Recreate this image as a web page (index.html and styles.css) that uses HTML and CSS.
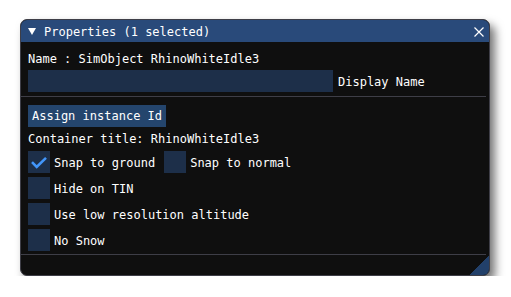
FILE: index.html
```html
<!DOCTYPE html>
<html lang="en">
<head>
  <meta charset="UTF-8" />
  <title>Properties</title>
  <link rel="stylesheet" href="styles.css">
</head>
<body>

  <div class="window">
    <div class="title-bar">
      <svg class="collapse" width="8" height="7" viewBox="0 0 8 7"><polygon points="0,0 8,0 4,7" fill="#fff"/></svg>
      <span class="title">Properties (1 selected)</span>
      <svg class="close" width="10" height="10" viewBox="0 0 10 10"><path d="M0.5 0.5 L9.5 9.5 M9.5 0.5 L0.5 9.5" stroke="#fff" stroke-width="1.2"/></svg>
    </div>

    <div class="content">
      <div class="text name-line">Name : SimObject RhinoWhiteIdle3</div>

      <div class="field-row">
        <div class="input"></div>
        <span class="text">Display Name</span>
      </div>

      <div class="separator"></div>

      <div class="button-row">
        <div class="button">Assign instance Id</div>
      </div>

      <div class="text container-line">Container title: RhinoWhiteIdle3</div>

      <!-- checkboxes -->
      <div class="check-row first">
        <div class="check-item">
          <div class="box">
            <svg width="22" height="22" viewBox="0 0 22 22"><path d="M4 11.2 L8.7 16 L18 6.8" fill="none" stroke="#4296fa" stroke-width="2.6"/></svg>
          </div>
          <span class="text">Snap to ground</span>
        </div>
        <div class="check-item">
          <div class="box"></div>
          <span class="text">Snap to normal</span>
        </div>
      </div>

      <div class="check-row">
        <div class="check-item">
          <div class="box"></div>
          <span class="text">Hide on TIN</span>
        </div>
      </div>

      <div class="check-row">
        <div class="check-item">
          <div class="box"></div>
          <span class="text">Use low resolution altitude</span>
        </div>
      </div>

      <div class="check-row">
        <div class="check-item">
          <div class="box"></div>
          <span class="text">No Snow</span>
        </div>
      </div>

      <div class="separator bottom"></div>
    </div>

    <div class="resize-grip"></div>
  </div>

</body>
</html>
```

FILE: styles.css
```css
body {
  margin: 0;
  background: #ffffff;
  font-family: 'DejaVu Sans Mono', 'Liberation Mono', monospace;
  font-size: 12px;
  line-height: 14px;
  color: #ffffff;
}

.window {
  position: relative;
  box-sizing: border-box;
  width: 470px;
  height: 257px;
  margin: 19px 0 0 20px;
  background-color: #0f0f0f;
  border: 1px solid #3e3e47;
  border-radius: 7px;
  overflow: hidden;
  box-shadow: 5px 6px 10px rgba(0, 0, 0, 0.55);
}

.title-bar {
  display: flex;
  align-items: center;
  height: 22px;
  padding: 0 5px 0 7px;
  background-color: #294a7a;
}

.collapse {
  flex: none;
  margin-top: 1px;
}

.title {
  flex: 1;
  margin-left: 8px;
  padding-top: 1px;
}

.close {
  flex: none;
  margin-top: 2px;
}

.content {
  display: flex;
  flex-direction: column;
  padding: 10px 7px 0 7px;
}

.text {
  white-space: pre;
}

.field-row {
  display: flex;
  align-items: center;
  margin-top: 4px;
}

.input {
  width: 305px;
  height: 22px;
  background-color: #1d2f49;
}

.field-row .text {
  margin-left: 5px;
  padding-top: 1px;
}

.separator {
  height: 1px;
  margin: 4px -4px 0 -7px;
  background-color: #3e3e47;
}

.button-row {
  display: flex;
  margin-top: 8px;
}

.button {
  height: 22px;
  padding: 0 4px;
  line-height: 22px;
  background-color: #24456d;
}

.container-line {
  margin-top: 5px;
}

.check-row {
  display: flex;
  gap: 9px;
  margin-top: 4px;
}

.check-row.first {
  margin-top: 5px;
}

.check-item {
  display: flex;
  align-items: center;
  gap: 4px;
}

.box {
  width: 22px;
  height: 22px;
  background-color: #1d2f49;
}

.box svg {
  display: block;
}

.check-item .text {
  padding-top: 1px;
}

.separator.bottom {
  margin-top: 3px;
}

.resize-grip {
  position: absolute;
  right: 0;
  bottom: 0;
  width: 20px;
  height: 20px;
  background: linear-gradient(to top left, #22406a 50%, transparent 50%);
}
```
